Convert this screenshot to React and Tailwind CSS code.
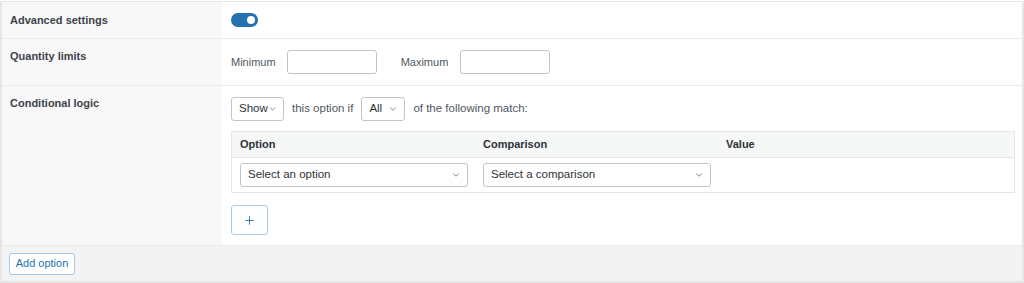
import { ChevronDown, Plus } from "lucide-react";

const font = { fontFamily: '"Liberation Sans", Arial, sans-serif' };

function Select({ label, className = "" }) {
  return (
    <div
      className={`flex items-center justify-between h-[24px] border border-[#c3c4c7] rounded-[3px] bg-white pl-[7px] pr-[6px] text-[11.5px] text-[#2c3338] ${className}`}
    >
      <span>{label}</span>
      <ChevronDown className="w-[10px] h-[10px] text-[#50575e]" strokeWidth={1.75} />
    </div>
  );
}

function Row({ label, children, className = "" }) {
  return (
    <div className={`flex border-b border-[#ebebeb] ${className}`}>
      <div className="w-[220px] shrink-0 bg-[#f8f8f8] pl-[8px] text-[11px] leading-[16px] font-bold text-[#3c434a]">
        {label}
      </div>
      <div className="flex-1 bg-white pl-[9px] pr-[7px]">{children}</div>
    </div>
  );
}

export default function App() {
  return (
    <div style={font} className="w-[1024px] h-[283px] bg-white">
      <div className="border-l-2 border-r-2 border-t border-b-2 border-[#e6e6e6] mt-[1px]">
        <Row label={<div className="pt-[10px]">Advanced settings</div>} className="h-[37px]">
          <div className="pt-[11px]">
            <div className="w-[27px] h-[14px] rounded-full bg-[#2271b1] relative">
              <div className="absolute right-[3px] top-[3px] w-[8px] h-[8px] rounded-full bg-white" />
            </div>
          </div>
        </Row>

        <Row label={<div className="pt-[9px]">Quantity limits</div>} className="h-[47px]">
          <div className="flex items-center pt-[11px] text-[11px] text-[#50575e]">
            <span>Minimum</span>
            <div className="ml-[11px] w-[90px] h-[24px] border border-[#c3c4c7] rounded-[3px]" />
            <span className="ml-[24px]">Maximum</span>
            <div className="ml-[12px] w-[90px] h-[24px] border border-[#c3c4c7] rounded-[3px]" />
          </div>
        </Row>

        <Row label={<div className="pt-[9px]">Conditional logic</div>} className="h-[160px]">
          <div className="pt-[11px]">
            <div className="flex items-center text-[11.5px] text-[#50575e]">
              <Select label="Show" className="w-[53px]" />
              <span className="ml-[8px]">this option if</span>
              <Select label="All" className="w-[44px] ml-[8px]" />
              <span className="ml-[8px]">of the following match:</span>
            </div>

            <div className="mt-[10px] border border-[#e5e5e5]">
              <div className="grid grid-cols-[243px_243px_1fr] h-[26px] items-center bg-[#f6f7f7] border-b border-[#e5e5e5] pl-[8px] text-[11px] font-bold text-[#2c3338]">
                <span>Option</span>
                <span>Comparison</span>
                <span>Value</span>
              </div>
              <div className="grid grid-cols-[243px_243px_1fr] h-[34px] items-center pl-[8px]">
                <Select label="Select an option" className="w-[228px]" />
                <Select label="Select a comparison" className="w-[228px]" />
                <span />
              </div>
            </div>

            <button className="mt-[12px] w-[37px] h-[30px] border border-[#a9cbe6] rounded-[3px] flex items-center justify-center bg-white">
              <Plus className="w-[13px] h-[13px] text-[#2271b1]" strokeWidth={1.6} />
            </button>
          </div>
        </Row>

        <div className="h-[35px] bg-[#f3f3f3] flex items-center pl-[7px]">
          <button className="h-[22px] w-[66px] border border-[#a9cbe6] rounded-[3px] bg-white text-[11px] text-[#2271b1]">
            Add option
          </button>
        </div>
      </div>
    </div>
  );
}
